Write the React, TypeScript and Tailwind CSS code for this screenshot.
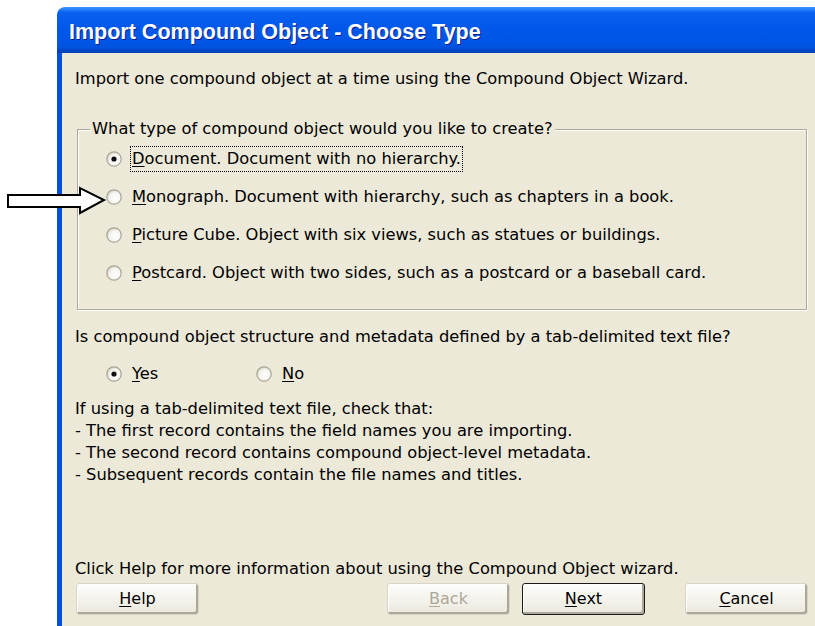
import React from 'react';

const ui = { fontFamily: '"DejaVu Sans", Tahoma, sans-serif' };

function Radio({ checked }: { checked?: boolean }) {
    return (
        <svg width="16" height="16" viewBox="0 0 16 16" className="shrink-0">
            <defs>
                <radialGradient id={checked ? 'rg-on' : 'rg-off'} cx="60%" cy="60%" r="60%">
                    <stop offset="0%" stopColor="#ffffff" />
                    <stop offset="70%" stopColor="#f4f3ee" />
                    <stop offset="100%" stopColor="#d6d3c6" />
                </radialGradient>
            </defs>
            <circle cx="8" cy="8" r="7.2" fill={`url(#${checked ? 'rg-on' : 'rg-off'})`} stroke="#a8a697" strokeWidth="1.2" />
            {checked && <circle cx="8" cy="8" r="2.6" fill="#111" />}
        </svg>
    );
}

// label text with the access-key letter underlined
function Label({ k, rest }: { k: string; rest: string }) {
    return (
        <span>
            <span className="underline underline-offset-2">{k}</span>
            {rest}
        </span>
    );
}

function WinButton({ children, disabled, primary }: { children: React.ReactNode; disabled?: boolean; primary?: boolean }) {
    return (
        <button
            className={
                'h-[32px] w-[123px] rounded-[3px] text-[16px] ' +
                (primary
                    ? 'border border-[#1a1a1a] bg-gradient-to-b from-[#fdfdfb] to-[#ebe8dc] shadow-[inset_-2px_-2px_0_#aca899,inset_1px_1px_0_#fff] '
                    : 'border border-[#d8d5c8] bg-gradient-to-b from-[#fdfdfb] to-[#ebe8dc] shadow-[inset_-2px_-2px_0_#aca899,inset_1px_1px_0_#fff] ') +
                (disabled ? 'text-[#aca899]' : 'text-black')
            }
            style={ui}
        >
            {children}
        </button>
    );
}

export default function App() {
    const types = [
        { k: 'D', rest: 'ocument. Document with no hierarchy.', checked: true },
        { k: 'M', rest: 'onograph. Document with hierarchy, such as chapters in a book.' },
        { k: 'P', rest: 'icture Cube. Object with six views, such as statues or buildings.' },
        { k: 'P', rest: 'ostcard. Object with two sides, such as a postcard or a baseball card.' },
    ];

    return (
        <div className="relative h-[626px] w-[815px] overflow-hidden bg-white" style={ui}>
            <div className="ml-[57px] mt-[7px] flex h-[619px] flex-col">
                {/* title bar */}
                <div className="flex h-[46px] items-center rounded-tl-[8px] bg-[linear-gradient(to_bottom,#3d95ff_0%,#0a61f0_12%,#0058ea_45%,#0054e3_85%,#003fb8_100%)] pl-[12px] pt-[4px]">
                    <span
                        className="text-[21.5px] font-bold text-white [text-shadow:1px_1px_0_#0a1e8c]"
                        style={{ fontFamily: '"Liberation Sans", Arial, sans-serif' }}
                    >
                        Import Compound Object - Choose Type
                    </span>
                </div>

                <div className="flex flex-1 flex-col border-l-[5px] border-[#0450dc] bg-[#ece9d8] text-[16.3px] leading-[22px] text-black">
                    <p className="ml-[13px] mt-[15px]">Import one compound object at a time using the Compound Object Wizard.</p>

                    {/* type group */}
                    <div className="relative ml-[15px] mr-[8px] mt-[39px] h-[181px] border border-[#aca899] pt-[10px] pl-[28px] shadow-[inset_1px_1px_0_#fff,1px_1px_0_#fff]">
                        <span className="absolute left-[12px] top-[-12px] bg-[#ece9d8] px-[2px]">
                            What type of compound object would you like to create?
                        </span>
                        {types.map((t, i) => (
                            <div key={i} className="flex h-[38px] items-center">
                                <Radio checked={t.checked} />
                                <span className={'ml-[9px] px-[1px] ' + (t.checked ? 'outline outline-1 outline-dotted outline-black leading-[24px]' : '')}>
                                    <Label k={t.k} rest={t.rest} />
                                </span>
                            </div>
                        ))}
                    </div>

                    <p className="ml-[13px] mt-[16px]">Is compound object structure and metadata defined by a tab-delimited text file?</p>

                    <div className="ml-[44px] mt-[15px] flex h-[22px] items-center">
                        <Radio checked />
                        <span className="ml-[10px] w-[124px]">
                            <Label k="Y" rest="es" />
                        </span>
                        <Radio />
                        <span className="ml-[10px]">
                            <Label k="N" rest="o" />
                        </span>
                    </div>

                    <div className="ml-[13px] mt-[13px]">
                        <p>If using a tab-delimited text file, check that:</p>
                        <p>- The first record contains the field names you are importing.</p>
                        <p>- The second record contains compound object-level metadata.</p>
                        <p>- Subsequent records contain the file names and titles.</p>
                    </div>

                    <p className="ml-[13px] mt-[72px]">Click Help for more information about using the Compound Object wizard.</p>

                    <div className="ml-[14px] mt-[3px] flex items-center">
                        <WinButton>
                            <Label k="H" rest="elp" />
                        </WinButton>
                        <div className="flex-1" />
                        <WinButton disabled>
                            <Label k="B" rest="ack" />
                        </WinButton>
                        <div className="w-[12px]" />
                        <WinButton primary>
                            <Label k="N" rest="ext" />
                        </WinButton>
                        <div className="w-[40px]" />
                        <WinButton>
                            <Label k="C" rest="ancel" />
                        </WinButton>
                        <div className="w-[7px]" />
                    </div>
                </div>
            </div>

            {/* pointer arrow */}
            <svg className="absolute left-0 top-[180px]" width="110" height="40" viewBox="0 0 110 40">
                <polygon points="8,15 80,15 80,8 104,20 80,33 80,27 8,27" fill="#fff" stroke="#000" strokeWidth="2" strokeLinejoin="miter" />
            </svg>
        </div>
    );
}
